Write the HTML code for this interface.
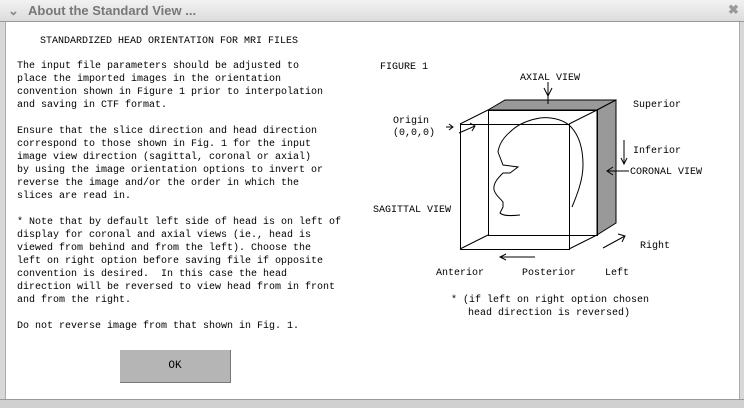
<!DOCTYPE html>
<html><head><meta charset="utf-8"><style>
body{margin:0;width:744px;height:407px;background:#fff;position:relative;overflow:hidden;font-family:"Liberation Mono",monospace;}
.tb{position:absolute;left:0;top:0;width:744px;height:21px;background:linear-gradient(#f2f2f2,#dcdcdc);border-bottom:1px solid #999;}
.tb span{position:absolute;left:28px;top:3px;font:bold 13px "Liberation Sans",sans-serif;color:#777;}
pre{position:absolute;margin:0;font-family:"Liberation Mono",monospace;font-size:10px;line-height:13px;color:#000;}
.lb{position:absolute;left:0;top:22px;width:5px;height:378px;background:#d8d8d8;border-right:1px solid #aaa;}
.rb{position:absolute;right:0;top:22px;width:4px;height:378px;background:#d8d8d8;border-left:1px solid #aaa;}
.bb{position:absolute;left:0;top:399px;width:744px;height:8px;background:#d0d0d0;border-top:1px solid #999;}
.ok{position:absolute;left:120px;top:350px;width:110px;height:32px;background:#b5b5b5;border-bottom:1px solid #777;border-right:1px solid #777;font-size:11px;text-align:center;line-height:32px;}
</style></head><body>
<div class="tb"><span style="left:8px;color:#888">&#8964;</span><span>About the Standard View ...</span><span style="left:728px;top:2px;color:#999">&#10006;</span></div>
<div class="lb"></div><div class="rb"></div><div class="bb"></div>
<pre style="left:40px;top:35px">STANDARDIZED HEAD ORIENTATION FOR MRI FILES</pre>
<pre style="left:17px;top:60px">The input file parameters should be adjusted to
place the imported images in the orientation
convention shown in Figure 1 prior to interpolation
and saving in CTF format.

Ensure that the slice direction and head direction
correspond to those shown in Fig. 1 for the input
image view direction (sagittal, coronal or axial)
by using the image orientation options to invert or
reverse the image and/or the order in which the
slices are read in.

* Note that by default left side of head is on left of
display for coronal and axial views (ie., head is
viewed from behind and from the left). Choose the
left on right option before saving file if opposite
convention is desired.  In this case the head
direction will be reversed to view head from in front
and from the right.

Do not reverse image from that shown in Fig. 1.</pre>
<div class="ok">OK</div>
<svg style="position:absolute;left:0;top:0" width="744" height="407">
<g fill="#999" stroke="#000" stroke-width="1">
<polygon points="488,110 505,100 616,100 597,110"/>
<polygon points="597,110 616,100 616,223 597,235"/>
</g>
<g fill="none" stroke="#000" stroke-width="1">
<rect x="460.5" y="124.5" width="109" height="125"/>
<rect x="488.5" y="110.5" width="109" height="125"/>
<line x1="460" y1="124" x2="488" y2="110"/><line x1="569" y1="124" x2="597" y2="110"/>
<line x1="460" y1="249" x2="488" y2="235"/><line x1="569" y1="249" x2="597" y2="235"/>
<path d="M572,207 C577,195 583,180 583,165 C583,150 580,135 569,125 C560,118 548,117 540,118 C528,120 518,124 510,132 C503,138 499,145 498,152 L503,165 L518,167 L510,173 L503,173 C498,178 493,183 494,190 C496,196 500,198 503,202 L503,207 L500,213 C503,216 510,216 520,215"/>
<path d="M548,82 v22 M544,88 l4,8 4,-8"/>
<path d="M624,140 v24 M621,158 l3,6 3,-6"/>
<path d="M607,171 h22 M613,167 l-6,4 6,4"/>
<path d="M459,133 l16,-7 M470,123 l5,3 -3,5"/>
<path d="M500,257 h35 M506,254 l-6,3 6,3"/>
<path d="M603,248 l22,-12 M618,234 l7,2 -3,6"/>
<path d="M446,127 h6 M449,124 l4,3 -4,3"/>
</g>
<g font-family="Liberation Mono,monospace" font-size="10" fill="#000">
<text x="380" y="69">FIGURE 1</text>
<text x="520" y="80">AXIAL VIEW</text>
<text x="633" y="107">Superior</text>
<text x="633" y="153">Inferior</text>
<text x="630" y="174">CORONAL VIEW</text>
<text x="393" y="123">Origin</text>
<text x="393" y="135">(0,0,0)</text>
<text x="373" y="212">SAGITTAL VIEW</text>
<text x="640" y="248">Right</text>
<text x="436" y="275">Anterior</text>
<text x="522" y="275">Posterior</text>
<text x="605" y="275">Left</text>
<text x="451" y="302">* (if left on right option chosen</text>
<text x="468" y="315">head direction is reversed)</text>
</g>
</svg>
</body></html>
